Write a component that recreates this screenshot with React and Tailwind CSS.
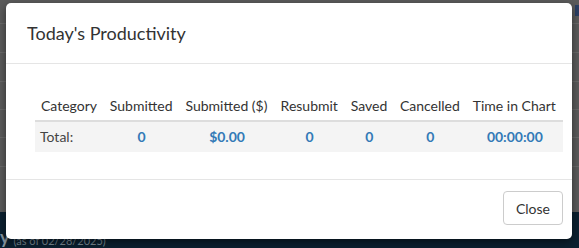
import React from "react";

const cols = ["Category", "Submitted", "Submitted ($)", "Resubmit", "Saved", "Cancelled", "Time in Chart"];
const vals = ["0", "$0.00", "0", "0", "0", "00:00:00"];

export default function App() {
  return (
    <div className="relative w-[579px] h-[248px] overflow-hidden bg-[#5b5b5b] font-['Lato','Noto_Sans',sans-serif]">
      {/* dimmed page behind */}
      <div className="flex flex-col h-[212px]">
        <div className="h-[24px] border-b border-[#6a6a6a]"></div>
        <div className="h-[29px] border-b border-[#6a6a6a]"></div>
        <div className="h-[29px] border-b border-[#6a6a6a]"></div>
        <div className="h-[28px] border-b border-[#6a6a6a]"></div>
        <div className="h-[28px] border-b border-[#6a6a6a]"></div>
        <div className="h-[29px] border-b border-[#6a6a6a]"></div>
      </div>
      <div className="h-[36px] bg-[#0b2030] flex items-end pb-[2px]">
        <span className="text-[18px] font-bold text-[#8796a0] leading-none">y</span>
        <span className="ml-[4px] text-[11px] text-[#7a8993] leading-none">(as of 02/28/2025)</span>
      </div>
      <div className="absolute right-0 top-[5px] w-[4px] h-[11px] bg-[#2b3f63]"></div>

      {/* modal */}
      <div className="absolute left-[6px] top-[3px] w-[566px] h-[236px] bg-white rounded-[5px] shadow-[0_3px_9px_rgba(0,0,0,0.5)] flex flex-col">
        <div className="h-[61px] border-b border-[#e5e5e5] flex items-center pl-[21px]">
          <h4 className="text-[18px] text-[#333] leading-none">Today's Productivity</h4>
        </div>
        <div className="pl-[29px] pr-[9px] pt-[27px] pb-[27px] border-b border-[#e5e5e5]">
          <table className="w-full border-collapse text-[14px]">
            <thead>
              <tr className="border-b-2 border-[#dddddd]">
                {cols.map((c) => (
                  <th key={c} className="font-normal text-[#333] text-left px-[6px] h-[30px] whitespace-nowrap leading-[20px]">{c}</th>
                ))}
              </tr>
            </thead>
            <tbody>
              <tr className="bg-[#f4f4f4]">
                <td className="text-[#444] text-left px-[5px] h-[31px] leading-[20px]">Total:</td>
                {vals.map((v, i) => (
                  <td key={i} className="text-[#337ab7] font-bold text-center px-[6px] h-[31px] leading-[20px]">{v}</td>
                ))}
              </tr>
            </tbody>
          </table>
        </div>
        <div className="flex justify-end pr-[9px] pt-[11px]">
          <button className="w-[60px] h-[34px] border border-[#cccccc] rounded-[4px] text-[14px] text-[#333] bg-white">Close</button>
        </div>
      </div>
    </div>
  );
}
